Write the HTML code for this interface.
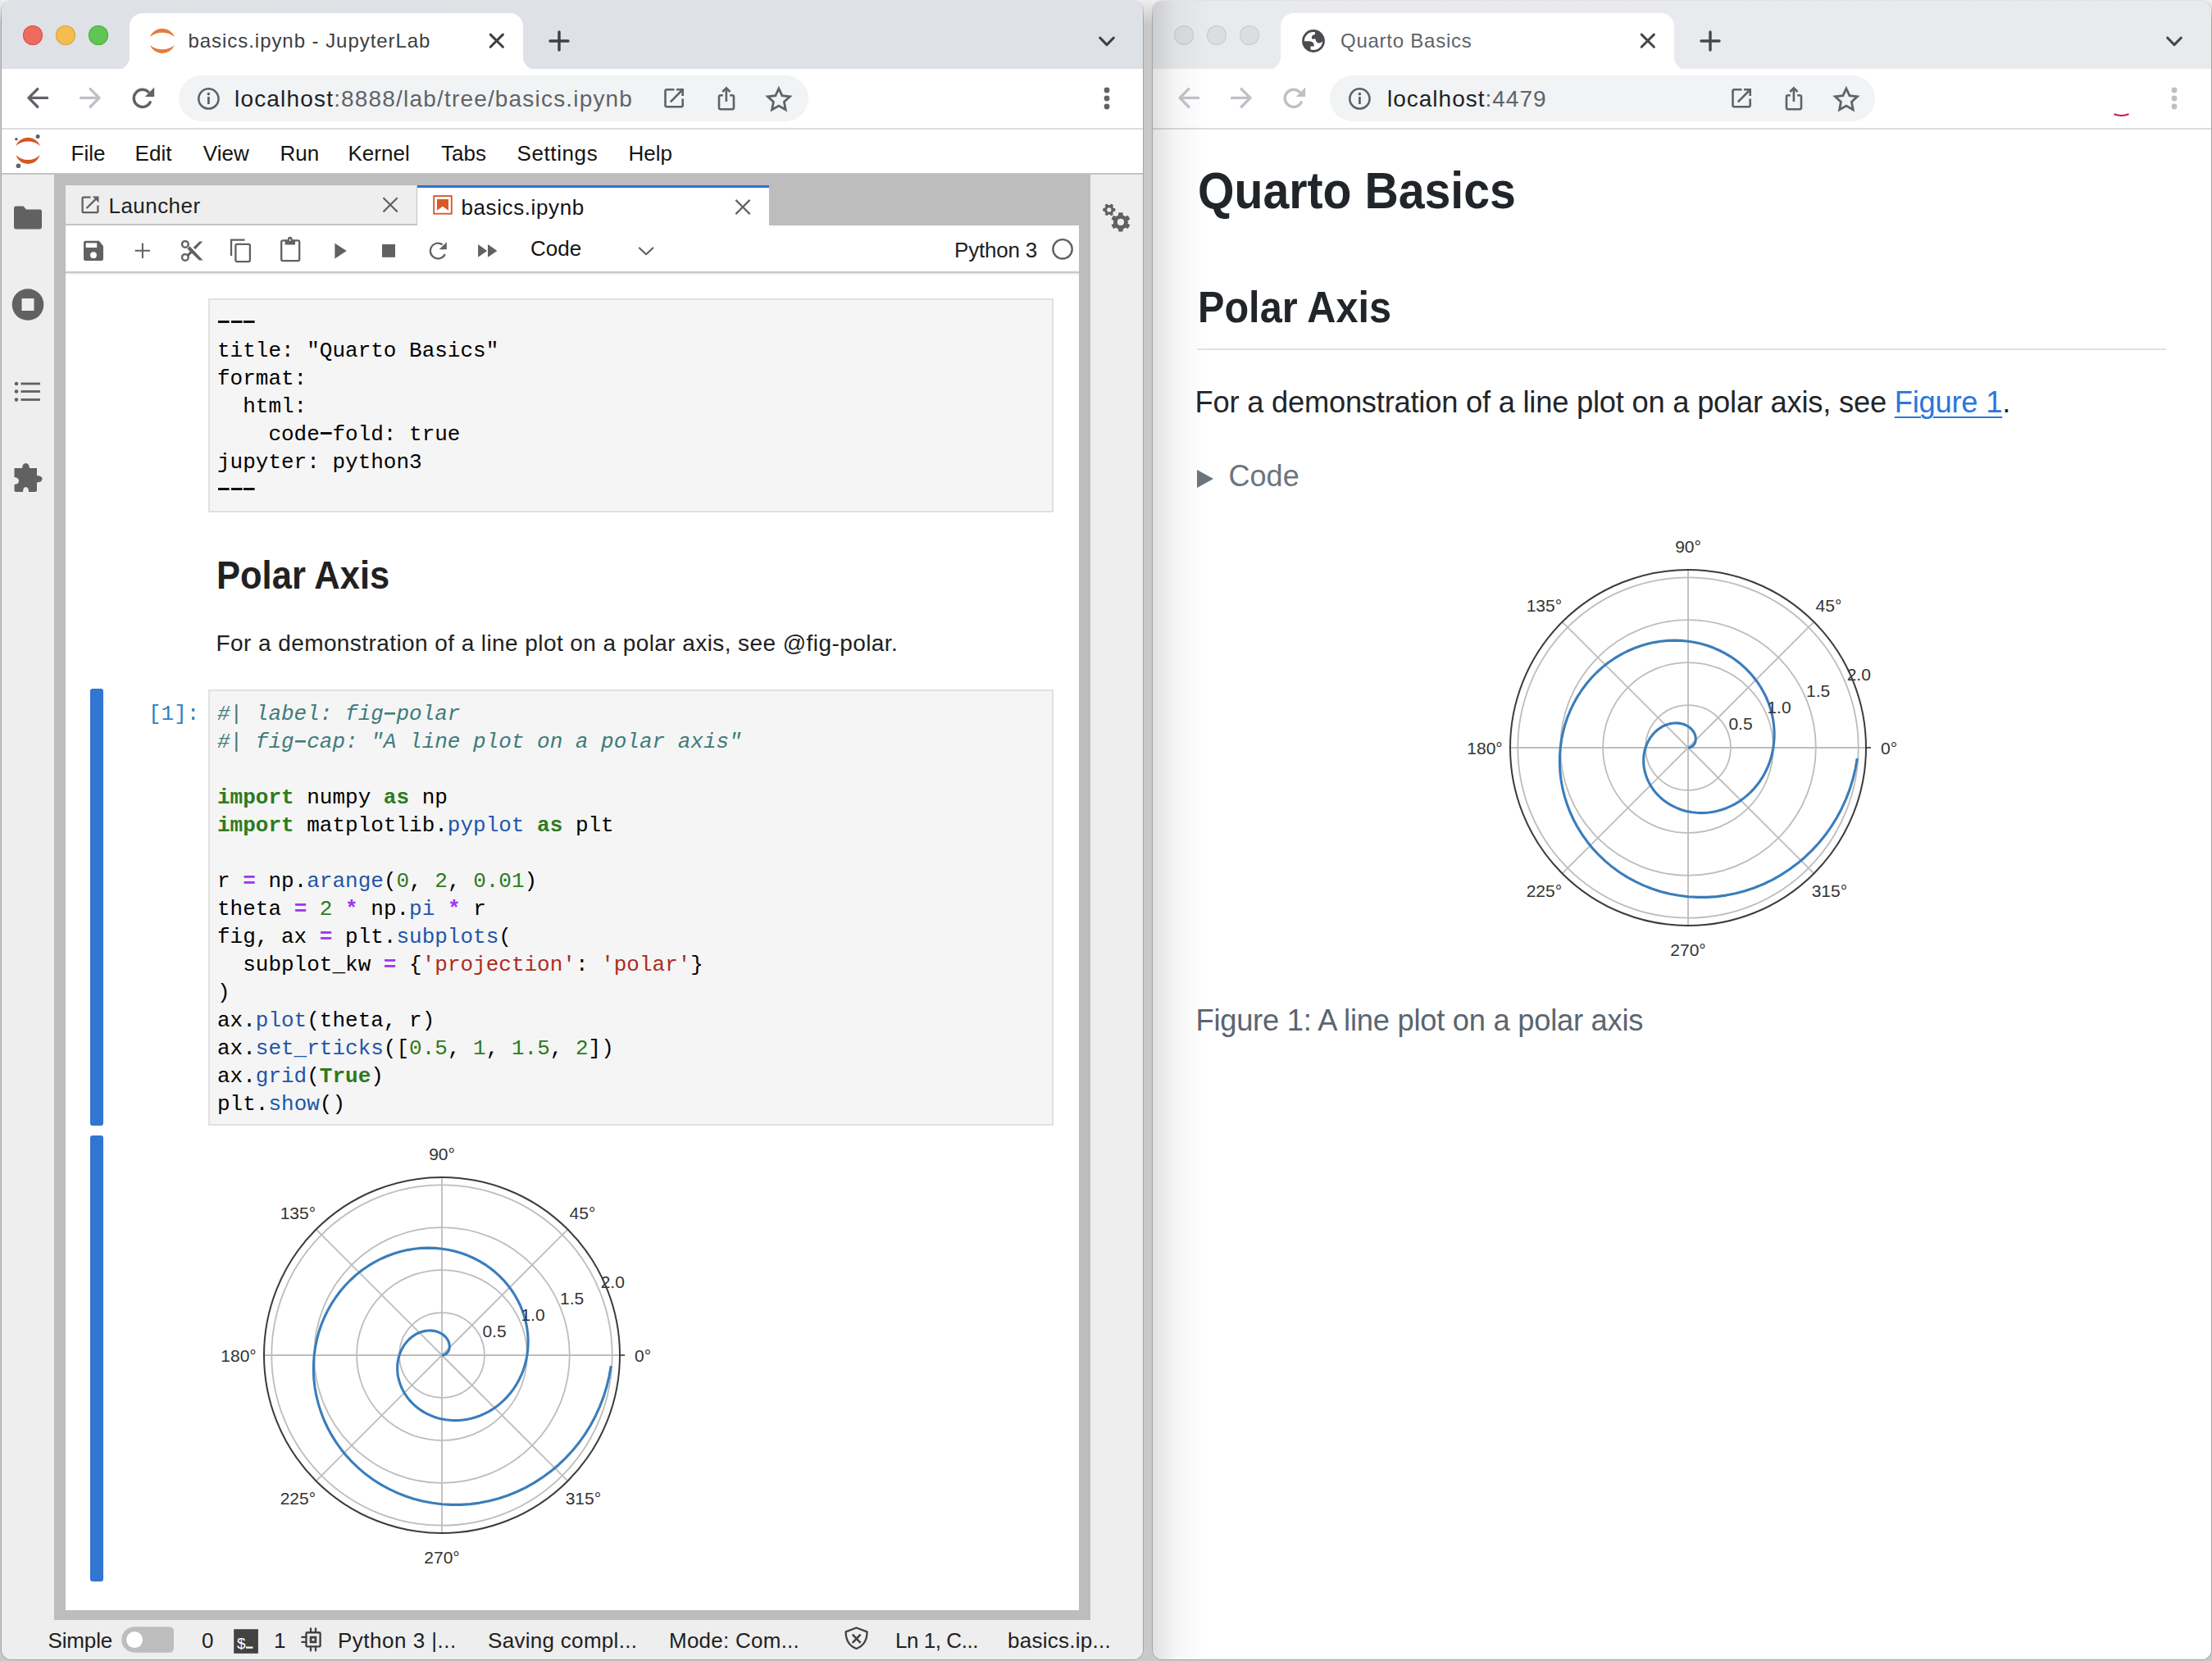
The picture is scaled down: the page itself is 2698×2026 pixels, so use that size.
<!DOCTYPE html>
<html><head><meta charset="utf-8"><style>
html,body{margin:0;padding:0;}
body{width:2698px;height:2026px;position:relative;overflow:hidden;background:linear-gradient(to bottom,#eeeeee 0,#c9c9c9 30px);font-family:"Liberation Sans", sans-serif;}
.r{position:absolute;display:block;}
.t{position:absolute;white-space:pre;line-height:1;}
.code{position:absolute;margin:0;font-family:"Liberation Mono", monospace;font-size:26px;line-height:34px;color:#000;}
.hy{display:inline-block;width:15.603px;height:34px;vertical-align:top;background:linear-gradient(#111,#111) no-repeat 1px 14.4px/13.6px 3.1px;} .hyc{background:linear-gradient(#3f7b7b,#3f7b7b) no-repeat 1.5px 14.6px/13px 2.6px;}
.cm{color:#3f7b7b;font-style:italic} .kw{color:#2d7b1e;font-weight:bold} .pr{color:#1f56a8} .op{color:#9e36f4;font-weight:bold} .nu{color:#2d7b1e} .st{color:#ae2a22}
svg text{font-family:"Liberation Sans", sans-serif;font-size:21px;fill:#333333;}
.foot{position:absolute;width:16px;height:16px;background:radial-gradient(circle at 0 0, #dee1e6 16px, #fff 16.5px);}
.foot.r2{background:radial-gradient(circle at 100% 0, #dee1e6 16px, #fff 16.5px);}
.foot.f2{background:radial-gradient(circle at 0 0, #e8eaed 16px, #fff 16.5px);}
.foot.f2.r2{background:radial-gradient(circle at 100% 0, #e8eaed 16px, #fff 16.5px);}
</style></head><body>
<div class="r" style="left:1px;top:0px;width:1394px;height:2025px;background:linear-gradient(to bottom,#e4e4e4 0,#a4a4a4 24px);border-radius:13px;"></div>
<div class="r" style="left:2px;top:1px;width:1392px;height:2023px;background:#dee1e6;border-radius:12px;"></div>
<div class="r" style="left:158px;top:16px;width:480px;height:69px;background:#ffffff;border-radius:16px 16px 0 0;"></div>
<div class="foot" style="left:142px;top:69px;"></div>
<div class="foot r2" style="left:638px;top:69px;"></div>
<div class="r" style="left:28px;top:31px;width:24px;height:24px;background:#ee6a5f;border-radius:50%;box-shadow:inset 0 0 0 1px #d6534a;"></div>
<div class="r" style="left:68px;top:31px;width:24px;height:24px;background:#f5bd4f;border-radius:50%;box-shadow:inset 0 0 0 1px #d9a13b;"></div>
<div class="r" style="left:108px;top:31px;width:24px;height:24px;background:#61c555;border-radius:50%;box-shadow:inset 0 0 0 1px #4da942;"></div>
<div class="r" style="left:2px;top:84px;width:1392px;height:73px;background:#ffffff;"></div>
<div class="r" style="left:2px;top:156px;width:1392px;height:2px;background:#dadce0;"></div>
<div class="r" style="left:218px;top:92px;width:768px;height:56px;background:#f1f3f4;border-radius:28px;"></div>
<div class="r" style="left:2px;top:158px;width:1392px;height:54px;background:#ffffff;"></div>
<div class="r" style="left:2px;top:211px;width:1392px;height:2px;background:#c4c4c4;"></div>
<div class="r" style="left:2px;top:213px;width:64px;height:1763px;background:#eeeeee;"></div>
<div class="r" style="left:1330px;top:213px;width:64px;height:1763px;background:#eeeeee;"></div>
<div class="r" style="left:66px;top:212px;width:1264px;height:1764px;background:#bdbdbd;"></div>
<div class="r" style="left:80px;top:226px;width:429px;height:49px;background:#eeeeee;"></div>
<div class="r" style="left:80px;top:273px;width:429px;height:2px;background:#c4c4c4;"></div>
<div class="r" style="left:508px;top:226px;width:1px;height:49px;background:#c4c4c4;"></div>
<div class="r" style="left:509px;top:226px;width:429px;height:49px;background:#ffffff;"></div>
<div class="r" style="left:509px;top:226px;width:429px;height:3px;background:#2f72d0;"></div>
<div class="r" style="left:80px;top:275px;width:1236px;height:1689px;background:#ffffff;"></div>
<div class="r" style="left:80px;top:331px;width:1236px;height:2px;background:#c8c8c8;box-shadow:0 1px 2px rgba(0,0,0,0.15);"></div>
<div class="r" style="left:2px;top:1976px;width:1392px;height:48px;background:#eeeeee;border-radius:0 0 12px 12px;"></div>
<div class="r" style="left:1405px;top:0px;width:1293px;height:2025px;background:linear-gradient(to bottom,#e4e4e4 0,#a4a4a4 24px);border-radius:13px;"></div>
<div class="r" style="left:1406px;top:1px;width:1291px;height:2023px;background:#e8eaed;border-radius:12px;"></div>
<div class="r" style="left:1562px;top:16px;width:480px;height:69px;background:#ffffff;border-radius:16px 16px 0 0;"></div>
<div class="foot f2" style="left:1546px;top:69px;"></div>
<div class="foot f2 r2" style="left:2042px;top:69px;"></div>
<div class="r" style="left:1432px;top:31px;width:24px;height:24px;background:#dcdddf;border-radius:50%;box-shadow:inset 0 0 0 1px #c8c9cb;"></div>
<div class="r" style="left:1472px;top:31px;width:24px;height:24px;background:#dcdddf;border-radius:50%;box-shadow:inset 0 0 0 1px #c8c9cb;"></div>
<div class="r" style="left:1512px;top:31px;width:24px;height:24px;background:#dcdddf;border-radius:50%;box-shadow:inset 0 0 0 1px #c8c9cb;"></div>
<div class="r" style="left:1406px;top:84px;width:1291px;height:73px;background:#ffffff;"></div>
<div class="r" style="left:1406px;top:156px;width:1291px;height:2px;background:#dadce0;"></div>
<div class="r" style="left:1622px;top:92px;width:665px;height:56px;background:#f1f3f4;border-radius:28px;"></div>
<div class="r" style="left:1406px;top:158px;width:1291px;height:1866px;background:#ffffff;border-radius:0 0 12px 12px;"></div>
<div class="r" style="left:1406px;top:1px;width:70px;height:2023px;background:linear-gradient(to right, rgba(0,0,0,0.12), rgba(0,0,0,0.035) 40%, rgba(0,0,0,0));border-radius:12px 0 0 12px;"></div>
<div class="t" style="left:229.5px;top:38.1px;font-size:24px;color:#3c4043;letter-spacing:0.95px;">basics.ipynb - JupyterLab</div>
<div class="t" style="left:286px;top:106.6px;font-size:28px;color:#202124;letter-spacing:1.18px;">localhost<span style="color:#5f6368">:8888/lab/tree/basics.ipynb</span></div>
<div class="t" style="left:86.5px;top:174.2px;font-size:26px;color:#141414;">File</div>
<div class="t" style="left:164.6px;top:174.2px;font-size:26px;color:#141414;">Edit</div>
<div class="t" style="left:247.8px;top:174.2px;font-size:26px;color:#141414;">View</div>
<div class="t" style="left:341.5px;top:174.2px;font-size:26px;color:#141414;">Run</div>
<div class="t" style="left:424.5px;top:174.2px;font-size:26px;color:#141414;">Kernel</div>
<div class="t" style="left:538px;top:174.2px;font-size:26px;color:#141414;">Tabs</div>
<div class="t" style="left:630.5px;top:174.2px;font-size:26px;color:#141414;letter-spacing:0.6px;">Settings</div>
<div class="t" style="left:766.5px;top:174.2px;font-size:26px;color:#141414;">Help</div>
<div class="t" style="left:132.5px;top:238.2px;font-size:26px;color:#212121;letter-spacing:0.45px;">Launcher</div>
<div class="t" style="left:562.5px;top:239.6px;font-size:26px;color:#141414;letter-spacing:0.6px;">basics.ipynb</div>
<div class="t" style="left:647px;top:290.4px;font-size:26px;color:#141414;">Code</div>
<div class="t" style="left:1164px;top:292.0px;font-size:26px;color:#212121;letter-spacing:-0.2px;">Python 3</div>
<div class="t" style="left:58.5px;top:1987.6px;font-size:26px;color:#212121;letter-spacing:-0.15px;">Simple</div>
<div class="t" style="left:246px;top:1987.6px;font-size:26px;color:#212121;">0</div>
<div class="t" style="left:334px;top:1987.6px;font-size:26px;color:#212121;">1</div>
<div class="t" style="left:412px;top:1987.6px;font-size:26px;color:#212121;letter-spacing:0.5px;">Python 3 |...</div>
<div class="t" style="left:595px;top:1987.6px;font-size:26px;color:#212121;letter-spacing:0.3px;">Saving compl...</div>
<div class="t" style="left:816px;top:1987.6px;font-size:26px;color:#212121;letter-spacing:0.25px;">Mode: Com...</div>
<div class="t" style="left:1092px;top:1987.6px;font-size:26px;color:#212121;letter-spacing:-0.45px;">Ln 1, C...</div>
<div class="t" style="left:1229px;top:1987.6px;font-size:26px;color:#212121;letter-spacing:0.26px;">basics.ip...</div>
<div class="r" style="left:254px;top:364px;width:1031px;height:261px;background:#f5f5f5;box-shadow:inset 0 0 0 2px #e0e0e0;"></div>
<pre class="code" style="left:265px;top:377.1px;"><span class="hy"></span><span class="hy"></span><span class="hy"></span>
title: "Quarto Basics"
format:
  html:
    code<span class="hy"></span>fold: true
jupyter: python3
<span class="hy"></span><span class="hy"></span><span class="hy"></span></pre>
<div class="t" style="left:263.5px;top:676.8px;font-size:49px;color:#212121;font-weight:bold;transform:scaleX(0.888);transform-origin:0 0;">Polar Axis</div>
<div class="t" style="left:263.5px;top:770.6px;font-size:28px;color:#212121;letter-spacing:0.42px;">For a demonstration of a line plot on a polar axis, see @fig-polar.</div>
<div class="r" style="left:110px;top:840px;width:16px;height:533px;background:#3176d0;border-radius:3px;"></div>
<div class="r" style="left:254px;top:841px;width:1031px;height:532px;background:#f5f5f5;box-shadow:inset 0 0 0 2px #e0e0e0;"></div>
<pre class="code" style="left:181px;top:854.1px;color:#307fc1">[1]:</pre>
<pre class="code" style="left:265px;top:854.1px;"><span class="cm">#| label: fig<span class="hy hyc"></span>polar</span>
<span class="cm">#| fig<span class="hy hyc"></span>cap: "A line plot on a polar axis"</span>

<span class="kw">import</span> numpy <span class="kw">as</span> np
<span class="kw">import</span> matplotlib.<span class="pr">pyplot</span> <span class="kw">as</span> plt

r <span class="op">=</span> np.<span class="pr">arange</span>(<span class="nu">0</span>, <span class="nu">2</span>, <span class="nu">0.01</span>)
theta <span class="op">=</span> <span class="nu">2</span> <span class="op">*</span> np.<span class="pr">pi</span> <span class="op">*</span> r
fig, ax <span class="op">=</span> plt.<span class="pr">subplots</span>(
  subplot_kw <span class="op">=</span> {<span class="st">'projection'</span>: <span class="st">'polar'</span>}
)
ax.<span class="pr">plot</span>(theta, r)
ax.<span class="pr">set_rticks</span>([<span class="nu">0.5</span>, <span class="nu">1</span>, <span class="nu">1.5</span>, <span class="nu">2</span>])
ax.<span class="pr">grid</span>(<span class="kw">True</span>)
plt.<span class="pr">show</span>()</pre>
<div class="r" style="left:110px;top:1385px;width:16px;height:544px;background:#3176d0;border-radius:3px;"></div>
<svg class="r" style="left:258.6px;top:1372.8px;overflow:visible;" width="560" height="560" viewBox="-280 -280 560 560"><circle r="51.9" fill="none" stroke="#bdbdbd" stroke-width="1.8"/>
<circle r="103.9" fill="none" stroke="#bdbdbd" stroke-width="1.8"/>
<circle r="155.8" fill="none" stroke="#bdbdbd" stroke-width="1.8"/>
<circle r="207.7" fill="none" stroke="#bdbdbd" stroke-width="1.8"/>
<line x1="0" y1="0" x2="217.0" y2="-0.0" stroke="#bdbdbd" stroke-width="1.8"/>
<line x1="0" y1="0" x2="153.4" y2="-153.4" stroke="#bdbdbd" stroke-width="1.8"/>
<line x1="0" y1="0" x2="0.0" y2="-217.0" stroke="#bdbdbd" stroke-width="1.8"/>
<line x1="0" y1="0" x2="-153.4" y2="-153.4" stroke="#bdbdbd" stroke-width="1.8"/>
<line x1="0" y1="0" x2="-217.0" y2="-0.0" stroke="#bdbdbd" stroke-width="1.8"/>
<line x1="0" y1="0" x2="-153.4" y2="153.4" stroke="#bdbdbd" stroke-width="1.8"/>
<line x1="0" y1="0" x2="-0.0" y2="217.0" stroke="#bdbdbd" stroke-width="1.8"/>
<line x1="0" y1="0" x2="153.4" y2="153.4" stroke="#bdbdbd" stroke-width="1.8"/>
<path d="M0.0,-0.0 L1.0,-0.1 L2.1,-0.3 L3.1,-0.6 L4.0,-1.0 L4.9,-1.6 L5.8,-2.3 L6.6,-3.1 L7.3,-4.0 L7.9,-5.0 L8.4,-6.1 L8.8,-7.3 L9.1,-8.5 L9.2,-9.8 L9.3,-11.2 L9.2,-12.6 L8.9,-14.0 L8.5,-15.5 L8.0,-16.9 L7.3,-18.3 L6.4,-19.8 L5.4,-21.1 L4.3,-22.4 L3.0,-23.7 L1.6,-24.9 L0.0,-26.0 L-1.7,-26.9 L-3.5,-27.8 L-5.4,-28.6 L-7.5,-29.2 L-9.6,-29.6 L-11.9,-29.9 L-14.1,-30.1 L-16.5,-30.0 L-18.9,-29.8 L-21.4,-29.4 L-23.8,-28.8 L-26.3,-28.0 L-28.8,-27.0 L-31.2,-25.8 L-33.6,-24.4 L-36.0,-22.8 L-38.2,-21.0 L-40.4,-19.0 L-42.5,-16.8 L-44.4,-14.4 L-46.3,-11.9 L-47.9,-9.1 L-49.5,-6.2 L-50.8,-3.2 L-51.9,-0.0 L-52.9,3.3 L-53.6,6.8 L-54.1,10.3 L-54.3,13.9 L-54.3,17.7 L-54.1,21.4 L-53.6,25.2 L-52.8,29.0 L-51.7,32.8 L-50.4,36.6 L-48.8,40.4 L-46.9,44.1 L-44.8,47.7 L-42.4,51.2 L-39.7,54.6 L-36.7,57.9 L-33.5,61.0 L-30.1,63.9 L-26.4,66.6 L-22.5,69.1 L-18.3,71.4 L-14.0,73.4 L-9.5,75.2 L-4.8,76.7 L-0.0,77.9 L5.0,78.8 L10.0,79.3 L15.2,79.6 L20.4,79.5 L25.7,79.0 L31.0,78.2 L36.3,77.1 L41.5,75.5 L46.7,73.7 L51.9,71.4 L56.9,68.8 L61.9,65.9 L66.6,62.6 L71.2,58.9 L75.6,54.9 L79.8,50.6 L83.7,46.0 L87.4,41.1 L90.8,35.9 L93.8,30.5 L96.6,24.8 L99.0,18.9 L101.0,12.8 L102.6,6.5 L103.9,0.0 L104.7,-6.6 L105.1,-13.3 L105.1,-20.0 L104.6,-26.9 L103.7,-33.7 L102.4,-40.5 L100.5,-47.3 L98.3,-54.0 L95.6,-60.7 L92.4,-67.1 L88.8,-73.5 L84.8,-79.6 L80.3,-85.5 L75.5,-91.2 L70.2,-96.6 L64.6,-101.7 L58.5,-106.5 L52.2,-110.9 L45.5,-114.9 L38.5,-118.5 L31.3,-121.7 L23.7,-124.5 L16.0,-126.7 L8.1,-128.5 L0.0,-129.8 L-8.2,-130.6 L-16.5,-130.9 L-24.9,-130.6 L-33.3,-129.8 L-41.7,-128.4 L-50.1,-126.5 L-58.4,-124.0 L-66.5,-121.0 L-74.6,-117.5 L-82.4,-113.4 L-90.0,-108.8 L-97.4,-103.7 L-104.5,-98.1 L-111.2,-92.0 L-117.6,-85.5 L-123.6,-78.5 L-129.2,-71.0 L-134.4,-63.2 L-139.0,-55.1 L-143.2,-46.5 L-146.9,-37.7 L-150.0,-28.6 L-152.5,-19.3 L-154.4,-9.7 L-155.8,-0.0 L-156.5,9.8 L-156.6,19.8 L-156.1,29.8 L-154.9,39.8 L-153.1,49.7 L-150.6,59.6 L-147.5,69.4 L-143.8,79.0 L-139.4,88.5 L-134.4,97.7 L-128.8,106.6 L-122.6,115.2 L-115.9,123.4 L-108.6,131.2 L-100.7,138.6 L-92.4,145.6 L-83.6,152.0 L-74.3,157.9 L-64.6,163.2 L-54.6,167.9 L-44.2,172.0 L-33.5,175.5 L-22.5,178.2 L-11.3,180.3 L-0.0,181.7 L11.5,182.4 L23.0,182.4 L34.6,181.6 L46.2,180.1 L57.8,177.8 L69.2,174.8 L80.5,171.0 L91.6,166.5 L102.4,161.3 L112.9,155.4 L123.1,148.8 L132.9,141.6 L142.3,133.7 L151.2,125.1 L159.6,116.0 L167.5,106.3 L174.7,96.1 L181.4,85.3 L187.3,74.2 L192.6,62.6 L197.2,50.6 L201.0,38.3 L204.0,25.8 L206.3,13.0" fill="none" stroke="#3a7dba" stroke-width="3.1" stroke-linejoin="round"/>
<circle r="217" fill="none" stroke="#3c3c3c" stroke-width="2"/>
<line x1="217" y1="0" x2="223" y2="0" stroke="#333" stroke-width="1.6"/>
<text x="0" y="-238.5" text-anchor="middle">90°</text>
<text x="171.5" y="-166.5" text-anchor="middle">45°</text>
<text x="-175.6" y="-166.5" text-anchor="middle">135°</text>
<text x="-248" y="7.5" text-anchor="middle">180°</text>
<text x="245" y="7.5" text-anchor="middle">0°</text>
<text x="-175.6" y="181.5" text-anchor="middle">225°</text>
<text x="172.4" y="181.5" text-anchor="middle">315°</text>
<text x="0" y="253.5" text-anchor="middle">270°</text>
<text x="64" y="-21.9" text-anchor="middle">0.5</text>
<text x="111" y="-42.3" text-anchor="middle">1.0</text>
<text x="158.7" y="-62.3" text-anchor="middle">1.5</text>
<text x="208.3" y="-82.5" text-anchor="middle">2.0</text></svg>
<div class="t" style="left:1635px;top:38.1px;font-size:24px;color:#5f6368;letter-spacing:0.75px;">Quarto Basics</div>
<div class="t" style="left:1692px;top:106.6px;font-size:28px;color:#202124;letter-spacing:1.0px;">localhost<span style="color:#5f6368">:4479</span></div>
<div class="t" style="left:1460.5px;top:200.9px;font-size:63px;color:#212529;font-weight:bold;transform:scaleX(0.908);transform-origin:0 0;">Quarto Basics</div>
<div class="t" style="left:1460.5px;top:348.0px;font-size:54.5px;color:#212529;font-weight:bold;transform:scaleX(0.892);transform-origin:0 0;">Polar Axis</div>
<div class="r" style="left:1460px;top:425px;width:1182px;height:2px;background:#dee2e6;"></div>
<div class="t" style="left:1457.5px;top:473.3px;font-size:36.3px;color:#212529;letter-spacing:-0.22px;">For a demonstration of a line plot on a polar axis, see <span style="color:#2a76dd;text-decoration:underline;text-decoration-thickness:2px;text-underline-offset:5px">Figure 1</span>.</div>
<svg class="r" style="left:1460px;top:573px;" width="20" height="22" viewBox="0 0 20 22"><path d="M0 0 L20 11 L0 22 Z" fill="#6c757d"/></svg>
<div class="t" style="left:1498.6px;top:562.9px;font-size:36px;color:#6c757d;">Code</div>
<svg class="r" style="left:1779.4px;top:631.8px;overflow:visible;" width="560" height="560" viewBox="-280 -280 560 560"><circle r="51.9" fill="none" stroke="#bdbdbd" stroke-width="1.8"/>
<circle r="103.9" fill="none" stroke="#bdbdbd" stroke-width="1.8"/>
<circle r="155.8" fill="none" stroke="#bdbdbd" stroke-width="1.8"/>
<circle r="207.7" fill="none" stroke="#bdbdbd" stroke-width="1.8"/>
<line x1="0" y1="0" x2="217.0" y2="-0.0" stroke="#bdbdbd" stroke-width="1.8"/>
<line x1="0" y1="0" x2="153.4" y2="-153.4" stroke="#bdbdbd" stroke-width="1.8"/>
<line x1="0" y1="0" x2="0.0" y2="-217.0" stroke="#bdbdbd" stroke-width="1.8"/>
<line x1="0" y1="0" x2="-153.4" y2="-153.4" stroke="#bdbdbd" stroke-width="1.8"/>
<line x1="0" y1="0" x2="-217.0" y2="-0.0" stroke="#bdbdbd" stroke-width="1.8"/>
<line x1="0" y1="0" x2="-153.4" y2="153.4" stroke="#bdbdbd" stroke-width="1.8"/>
<line x1="0" y1="0" x2="-0.0" y2="217.0" stroke="#bdbdbd" stroke-width="1.8"/>
<line x1="0" y1="0" x2="153.4" y2="153.4" stroke="#bdbdbd" stroke-width="1.8"/>
<path d="M0.0,-0.0 L1.0,-0.1 L2.1,-0.3 L3.1,-0.6 L4.0,-1.0 L4.9,-1.6 L5.8,-2.3 L6.6,-3.1 L7.3,-4.0 L7.9,-5.0 L8.4,-6.1 L8.8,-7.3 L9.1,-8.5 L9.2,-9.8 L9.3,-11.2 L9.2,-12.6 L8.9,-14.0 L8.5,-15.5 L8.0,-16.9 L7.3,-18.3 L6.4,-19.8 L5.4,-21.1 L4.3,-22.4 L3.0,-23.7 L1.6,-24.9 L0.0,-26.0 L-1.7,-26.9 L-3.5,-27.8 L-5.4,-28.6 L-7.5,-29.2 L-9.6,-29.6 L-11.9,-29.9 L-14.1,-30.1 L-16.5,-30.0 L-18.9,-29.8 L-21.4,-29.4 L-23.8,-28.8 L-26.3,-28.0 L-28.8,-27.0 L-31.2,-25.8 L-33.6,-24.4 L-36.0,-22.8 L-38.2,-21.0 L-40.4,-19.0 L-42.5,-16.8 L-44.4,-14.4 L-46.3,-11.9 L-47.9,-9.1 L-49.5,-6.2 L-50.8,-3.2 L-51.9,-0.0 L-52.9,3.3 L-53.6,6.8 L-54.1,10.3 L-54.3,13.9 L-54.3,17.7 L-54.1,21.4 L-53.6,25.2 L-52.8,29.0 L-51.7,32.8 L-50.4,36.6 L-48.8,40.4 L-46.9,44.1 L-44.8,47.7 L-42.4,51.2 L-39.7,54.6 L-36.7,57.9 L-33.5,61.0 L-30.1,63.9 L-26.4,66.6 L-22.5,69.1 L-18.3,71.4 L-14.0,73.4 L-9.5,75.2 L-4.8,76.7 L-0.0,77.9 L5.0,78.8 L10.0,79.3 L15.2,79.6 L20.4,79.5 L25.7,79.0 L31.0,78.2 L36.3,77.1 L41.5,75.5 L46.7,73.7 L51.9,71.4 L56.9,68.8 L61.9,65.9 L66.6,62.6 L71.2,58.9 L75.6,54.9 L79.8,50.6 L83.7,46.0 L87.4,41.1 L90.8,35.9 L93.8,30.5 L96.6,24.8 L99.0,18.9 L101.0,12.8 L102.6,6.5 L103.9,0.0 L104.7,-6.6 L105.1,-13.3 L105.1,-20.0 L104.6,-26.9 L103.7,-33.7 L102.4,-40.5 L100.5,-47.3 L98.3,-54.0 L95.6,-60.7 L92.4,-67.1 L88.8,-73.5 L84.8,-79.6 L80.3,-85.5 L75.5,-91.2 L70.2,-96.6 L64.6,-101.7 L58.5,-106.5 L52.2,-110.9 L45.5,-114.9 L38.5,-118.5 L31.3,-121.7 L23.7,-124.5 L16.0,-126.7 L8.1,-128.5 L0.0,-129.8 L-8.2,-130.6 L-16.5,-130.9 L-24.9,-130.6 L-33.3,-129.8 L-41.7,-128.4 L-50.1,-126.5 L-58.4,-124.0 L-66.5,-121.0 L-74.6,-117.5 L-82.4,-113.4 L-90.0,-108.8 L-97.4,-103.7 L-104.5,-98.1 L-111.2,-92.0 L-117.6,-85.5 L-123.6,-78.5 L-129.2,-71.0 L-134.4,-63.2 L-139.0,-55.1 L-143.2,-46.5 L-146.9,-37.7 L-150.0,-28.6 L-152.5,-19.3 L-154.4,-9.7 L-155.8,-0.0 L-156.5,9.8 L-156.6,19.8 L-156.1,29.8 L-154.9,39.8 L-153.1,49.7 L-150.6,59.6 L-147.5,69.4 L-143.8,79.0 L-139.4,88.5 L-134.4,97.7 L-128.8,106.6 L-122.6,115.2 L-115.9,123.4 L-108.6,131.2 L-100.7,138.6 L-92.4,145.6 L-83.6,152.0 L-74.3,157.9 L-64.6,163.2 L-54.6,167.9 L-44.2,172.0 L-33.5,175.5 L-22.5,178.2 L-11.3,180.3 L-0.0,181.7 L11.5,182.4 L23.0,182.4 L34.6,181.6 L46.2,180.1 L57.8,177.8 L69.2,174.8 L80.5,171.0 L91.6,166.5 L102.4,161.3 L112.9,155.4 L123.1,148.8 L132.9,141.6 L142.3,133.7 L151.2,125.1 L159.6,116.0 L167.5,106.3 L174.7,96.1 L181.4,85.3 L187.3,74.2 L192.6,62.6 L197.2,50.6 L201.0,38.3 L204.0,25.8 L206.3,13.0" fill="none" stroke="#3a7dba" stroke-width="3.1" stroke-linejoin="round"/>
<circle r="217" fill="none" stroke="#3c3c3c" stroke-width="2"/>
<line x1="217" y1="0" x2="223" y2="0" stroke="#333" stroke-width="1.6"/>
<text x="0" y="-238.5" text-anchor="middle">90°</text>
<text x="171.5" y="-166.5" text-anchor="middle">45°</text>
<text x="-175.6" y="-166.5" text-anchor="middle">135°</text>
<text x="-248" y="7.5" text-anchor="middle">180°</text>
<text x="245" y="7.5" text-anchor="middle">0°</text>
<text x="-175.6" y="181.5" text-anchor="middle">225°</text>
<text x="172.4" y="181.5" text-anchor="middle">315°</text>
<text x="0" y="253.5" text-anchor="middle">270°</text>
<text x="64" y="-21.9" text-anchor="middle">0.5</text>
<text x="111" y="-42.3" text-anchor="middle">1.0</text>
<text x="158.7" y="-62.3" text-anchor="middle">1.5</text>
<text x="208.3" y="-82.5" text-anchor="middle">2.0</text></svg>
<div class="t" style="left:1458.5px;top:1226.9px;font-size:36.3px;color:#5a6570;letter-spacing:-0.25px;">Figure 1: A line plot on a polar axis</div>
<svg class="r" style="left:0;top:0" width="2698" height="2026" viewBox="0 0 2698 2026"><path d="M182.9,44.9 A16.19,16.19 0 0 1 212.9,44.9 A24.23,24.23 0 0 0 182.9,44.9 Z" fill="#e67a3a"/><path d="M182.9,55.2 A16.38,16.38 0 0 0 212.9,55.2 A24.61,24.61 0 0 1 182.9,55.2 Z" fill="#e67a3a"/><path d="M598.1999999999999,42.1 L613.4,57.3 M613.4,42.1 L598.1999999999999,57.3" stroke="#3c4043" stroke-width="3" stroke-linecap="round"/><path d="M671,50 H693 M682,39 V61" stroke="#3c4043" stroke-width="3.4" stroke-linecap="round"/><path d="M1341.7,46.166666666666664 L1350,54.6 L1358.3,46.166666666666664" fill="none" stroke="#3c4043" stroke-width="3" stroke-linecap="round" stroke-linejoin="round"/><g fill="none" stroke-linecap="round" stroke-linejoin="round" stroke-width="3.4"><path d="M57.6,119.4 H35 M45.8,108.6 L35,119.4 L45.8,130.2" stroke="#5f6368"/><path d="M98.5,119.4 H121 M110.2,108.6 L121,119.4 L110.2,130.2" stroke="#bdc1c6"/></g><path d="M183.2,124.8 A10.6,10.6 0 1 1 180.9,111.9" fill="none" stroke="#5f6368" stroke-width="3.4" stroke-linecap="round"/><path d="M188.2,106.6 V118 H176.8 Z" fill="#5f6368"/><circle cx="254.4" cy="120.4" r="12.1" fill="none" stroke="#5f6368" stroke-width="2.6"/><circle cx="254.4" cy="114.6" r="1.8" fill="#5f6368"/><rect x="253.0" y="118" width="2.8" height="9" fill="#5f6368"/><g fill="none" stroke="#5f6368" stroke-width="2.6"><path d="M822.5,109.3 H813.5 Q811.5,109.3 811.5,111.3 V128.3 Q811.5,130.3 813.5,130.3 H830.7 Q832.7,130.3 832.7,128.3 V120.5"/><path d="M817.8,124.4 L831.5,110.5"/><path d="M825,109.3 H832.7 V117"/></g><g fill="none" stroke="#5f6368" stroke-width="2.6"><path d="M881.8,116.3 H879 Q877,116.3 877,118.3 V131.2 Q877,133.2 879,133.2 H893 Q895,133.2 895,131.2 V118.3 Q895,116.3 893,116.3 H890.2"/><path d="M885.9,124 V108"/><path d="M881.3,112 L885.9,107.4 L890.5,112"/></g><polygon points="949.9,108.0 953.9,116.7 963.4,117.8 956.4,124.3 958.2,133.7 949.9,129.0 941.6,133.7 943.4,124.3 936.4,117.8 945.9,116.7" fill="none" stroke="#5f6368" stroke-width="2.8" stroke-linejoin="miter"/><circle cx="1350" cy="110" r="3.4" fill="#5f6368"/><circle cx="1350" cy="120" r="3.4" fill="#5f6368"/><circle cx="1350" cy="130" r="3.4" fill="#5f6368"/><path d="M19.3,177.9 A15.89,15.89 0 0 1 48.9,177.9 A23.31,23.31 0 0 0 19.3,177.9 Z" fill="#d6561f"/><path d="M19.3,189.1 A15.50,15.50 0 0 0 48.9,189.1 A21.25,21.25 0 0 1 19.3,189.1 Z" fill="#d6561f"/><circle cx="46.1" cy="166.6" r="2.5" fill="#616161"/><circle cx="19.9" cy="169.8" r="1.8" fill="#616161"/><circle cx="22.4" cy="202.2" r="2.8" fill="#616161"/><path d="M17,254 Q17,251.6 19.4,251.6 H28.5 L32,255.4 H48.6 Q51,255.4 51,257.8 V277 Q51,279.4 48.6,279.4 H19.4 Q17,279.4 17,277 Z" fill="#616161"/><circle cx="34" cy="371.5" r="19.3" fill="#616161"/><rect x="26.5" y="364" width="15" height="15" fill="#eeeeee"/><circle cx="20" cy="468.0" r="2.3" fill="#616161"/><rect x="25.5" y="466.6" width="23.5" height="2.8" fill="#616161"/><circle cx="20" cy="477.5" r="2.3" fill="#616161"/><rect x="25.5" y="476.1" width="23.5" height="2.8" fill="#616161"/><circle cx="20" cy="487.5" r="2.3" fill="#616161"/><rect x="25.5" y="486.1" width="23.5" height="2.8" fill="#616161"/><path d="M17.5,571 H27 Q27.5,565 31.5,565 Q35.5,565 36,571 H45 V580 Q51.5,580.5 51.5,584 Q51.5,588 45,588.5 V598 Q45,600 43,600 H35 Q35,594 31.5,594 Q28,594 28,600 H19.5 Q17.5,600 17.5,598 V591 Q23,590.5 23,586.5 Q23,582.5 17.5,582 Z" fill="#616161"/><g fill="none" stroke="#616161" stroke-width="2.3"><path d="M110.5,240.6 H102 Q100.6,240.6 100.6,242 V257.8 Q100.6,259.2 102,259.2 H118 Q119.4,259.2 119.4,257.8 V250.5"/><path d="M105.6,254 L118,241.6"/></g><path d="M112.7,239.5 H120.5 V247.3 Z" fill="#616161"/><path d="M467.5,241.20000000000002 L484.70000000000005,258.40000000000003 M484.70000000000005,241.20000000000002 L467.5,258.40000000000003" stroke="#616161" stroke-width="2.2"/><path d="M897.4,243.9 L914.6,261.1 M914.6,243.9 L897.4,261.1" stroke="#616161" stroke-width="2.2"/><rect x="529.2" y="239.1" width="21.6" height="21.6" fill="none" stroke="#da5b27" stroke-width="1.9"/><path d="M533,242.9 H547 V256.8 L540,251.7 L533,256.8 Z" fill="#d95a24"/><path d="M102,296 Q102,293.8 104.2,293.8 H120.8 L126,300.3 V315.8 Q126,318 123.8,318 H104.2 Q102,318 102,315.8 Z" fill="#616161"/><rect x="104.7" y="296.4" width="13.5" height="5.6" fill="#fff"/><circle cx="114" cy="311.2" r="3.9" fill="#fff"/><path d="M164.7,305.8 H183.1 M173.9,296.6 V315" stroke="#616161" stroke-width="2"/><g fill="none" stroke="#616161" stroke-width="2.4"><circle cx="225.9" cy="297.9" r="3.8"/><circle cx="225.9" cy="313.9" r="3.8"/></g><path d="M228.4,303.4 L231.4,300.2 L247.6,317.4 H243 Z" fill="#616161"/><path d="M235.8,301.8 L243.4,294.5 H247.2 L238.2,304.2 Z" fill="#616161"/><path d="M229,311.6 L235,305.6" stroke="#616161" stroke-width="3"/><path d="M282,312 V292.7 H298.5" fill="none" stroke="#616161" stroke-width="2.3"/><rect x="287.4" y="297.8" width="17.5" height="21.3" rx="1.8" fill="none" stroke="#616161" stroke-width="2.3"/><rect x="343.2" y="293.3" width="22" height="24.8" rx="1.8" fill="none" stroke="#616161" stroke-width="2.3"/><rect x="347.6" y="292.5" width="12.4" height="6" fill="#616161"/><circle cx="353.8" cy="291.6" r="2.8" fill="#616161"/><circle cx="353.8" cy="292.8" r="1.1" fill="#fff"/><path d="M408.4,296.7 L422.8,306 L408.4,315.5 Z" fill="#616161"/><rect x="466" y="298" width="16" height="15.8" fill="#616161"/><path d="M542.8,310.0 A9.4,9.4 0 1 1 539.7,298.3" fill="none" stroke="#616161" stroke-width="2.2"/><path d="M544.8,295.2 V304.3 H535.7 Z" fill="#616161"/><path d="M583.1,298 L594.1,306 L583.1,313.8 Z M595,298 L606.4,306 L595,313.8 Z" fill="#616161"/><path d="M779.9,302.5 L788.1,310.2 L796.3000000000001,302.5" fill="none" stroke="#616161" stroke-width="2.2" stroke-linecap="round" stroke-linejoin="round"/><circle cx="1296" cy="303.8" r="11.7" fill="none" stroke="#616161" stroke-width="2.4"/><circle cx="1352.8" cy="255.9" r="5.9" fill="#616161"/><rect x="1351.00" y="248.30" width="3.60" height="7.60" rx="0.8" fill="#616161" transform="rotate(30.0 1352.8 255.9)"/><rect x="1351.00" y="248.30" width="3.60" height="7.60" rx="0.8" fill="#616161" transform="rotate(90.0 1352.8 255.9)"/><rect x="1351.00" y="248.30" width="3.60" height="7.60" rx="0.8" fill="#616161" transform="rotate(150.0 1352.8 255.9)"/><rect x="1351.00" y="248.30" width="3.60" height="7.60" rx="0.8" fill="#616161" transform="rotate(210.0 1352.8 255.9)"/><rect x="1351.00" y="248.30" width="3.60" height="7.60" rx="0.8" fill="#616161" transform="rotate(270.0 1352.8 255.9)"/><rect x="1351.00" y="248.30" width="3.60" height="7.60" rx="0.8" fill="#616161" transform="rotate(330.0 1352.8 255.9)"/><circle cx="1352.8" cy="255.9" r="2.6" fill="#eeeeee"/><circle cx="1366.9" cy="270.9" r="9.0" fill="#616161"/><rect x="1364.10" y="259.20" width="5.60" height="11.70" rx="0.8" fill="#616161" transform="rotate(0.0 1366.9 270.9)"/><rect x="1364.10" y="259.20" width="5.60" height="11.70" rx="0.8" fill="#616161" transform="rotate(60.0 1366.9 270.9)"/><rect x="1364.10" y="259.20" width="5.60" height="11.70" rx="0.8" fill="#616161" transform="rotate(120.0 1366.9 270.9)"/><rect x="1364.10" y="259.20" width="5.60" height="11.70" rx="0.8" fill="#616161" transform="rotate(180.0 1366.9 270.9)"/><rect x="1364.10" y="259.20" width="5.60" height="11.70" rx="0.8" fill="#616161" transform="rotate(240.0 1366.9 270.9)"/><rect x="1364.10" y="259.20" width="5.60" height="11.70" rx="0.8" fill="#616161" transform="rotate(300.0 1366.9 270.9)"/><circle cx="1366.9" cy="270.9" r="4.1" fill="#eeeeee"/><path d="M164,1984.2 H206 Q212,1984.2 212,1990.2 V2009.7 Q212,2015.7 206,2015.7 H164 A15.75,15.75 0 0 1 164,1984.2 Z" fill="#bdbdbd"/><circle cx="164.1" cy="2000.1" r="10" fill="#fff"/><rect x="285.2" y="1987.2" width="29.7" height="29.6" fill="#424242"/><text x="289" y="2011" style="font-family:'Liberation Sans',sans-serif;font-size:19px;fill:#fff">$</text><rect x="300" y="2008.5" width="8.5" height="2.2" fill="#fff"/><rect x="373.5" y="1991.3" width="17.1" height="17.1" rx="1.2" fill="none" stroke="#424242" stroke-width="2.4"/><rect x="377.7" y="1995.7" width="8.6" height="8.6" fill="#424242"/><rect x="380.5" y="1998.5" width="3" height="3" fill="#eeeeee"/><path d="M379,1986.5 V1991 M385,1986.5 V1991 M379,2008.5 V2013.3 M385,2008.5 V2013.3 M368.4,1996.9 H373 M368.4,2002.9 H373" stroke="#424242" stroke-width="2.4" stroke-linecap="round"/><path d="M1044.5,1985.5 L1031.6,1990.3 Q1031.6,2006 1044.5,2011 Q1057.6,2006 1057.6,1990.3 Z" fill="none" stroke="#424242" stroke-width="2.3" stroke-linejoin="round"/><path d="M1039.8,1993.6 L1049.6,2003.8 M1049.6,1993.6 L1039.8,2003.8" stroke="#424242" stroke-width="2.6"/><circle cx="1602" cy="50" r="12.5" fill="none" stroke="#4a4c50" stroke-width="2.8"/><path d="M1604,37.5 V42 Q1600,43 1600,45 V47.5 H1604.5 Q1605,52.5 1609,52.5 Q1612,52.5 1614.5,48.5 A12.5,12.5 0 0 0 1604,37.5 Z" fill="#4a4c50"/><path d="M1589.5,50.3 H1597 Q1602.7,50.8 1602.7,55 V56.5 H1598.5 V61.5 A12.5,12.5 0 0 1 1589.5,50.3 Z" fill="#4a4c50"/><path d="M2002.2,42.1 L2017.3999999999999,57.3 M2017.3999999999999,42.1 L2002.2,57.3" stroke="#45474a" stroke-width="3" stroke-linecap="round"/><path d="M2075,50 H2097 M2086,39 V61" stroke="#45474a" stroke-width="3.4" stroke-linecap="round"/><path d="M2643.7,46.166666666666664 L2652,54.6 L2660.3,46.166666666666664" fill="none" stroke="#45474a" stroke-width="3" stroke-linecap="round" stroke-linejoin="round"/><g fill="none" stroke-linecap="round" stroke-linejoin="round" stroke-width="3.4"><path d="M1461.6,119.4 H1439 M1449.8,108.6 L1439,119.4 L1449.8,130.2" stroke="#bdc1c6"/><path d="M1502.5,119.4 H1525 M1514.2,108.6 L1525,119.4 L1514.2,130.2" stroke="#bdc1c6"/></g><path d="M1587.2,124.8 A10.6,10.6 0 1 1 1584.9,111.9" fill="none" stroke="#bdc1c6" stroke-width="3.4" stroke-linecap="round"/><path d="M1592.2,106.6 V118 H1580.8 Z" fill="#bdc1c6"/><circle cx="1658.4" cy="120.4" r="12.1" fill="none" stroke="#5f6368" stroke-width="2.6"/><circle cx="1658.4" cy="114.6" r="1.8" fill="#5f6368"/><rect x="1657.0" y="118" width="2.8" height="9" fill="#5f6368"/><g fill="none" stroke="#5f6368" stroke-width="2.6"><path d="M2124.5,109.3 H2115.5 Q2113.5,109.3 2113.5,111.3 V128.3 Q2113.5,130.3 2115.5,130.3 H2132.7 Q2134.7,130.3 2134.7,128.3 V120.5"/><path d="M2119.8,124.4 L2133.5,110.5"/><path d="M2127,109.3 H2134.7 V117"/></g><g fill="none" stroke="#5f6368" stroke-width="2.6"><path d="M2183.8,116.3 H2181 Q2179,116.3 2179,118.3 V131.2 Q2179,133.2 2181,133.2 H2195 Q2197,133.2 2197,131.2 V118.3 Q2197,116.3 2195,116.3 H2192.2"/><path d="M2187.9,124 V108"/><path d="M2183.3,112 L2187.9,107.4 L2192.5,112"/></g><polygon points="2251.9,108.0 2255.9,116.7 2265.4,117.8 2258.4,124.3 2260.2,133.7 2251.9,129.0 2243.6,133.7 2245.4,124.3 2238.4,117.8 2247.9,116.7" fill="none" stroke="#5f6368" stroke-width="2.8" stroke-linejoin="miter"/><circle cx="2652" cy="110" r="3.4" fill="#bdc1c6"/><circle cx="2652" cy="120" r="3.4" fill="#bdc1c6"/><circle cx="2652" cy="130" r="3.4" fill="#bdc1c6"/><path d="M2578.5,139.2 Q2587.5,142.6 2596.5,139.2" fill="none" stroke="#c2185b" stroke-width="2"/></svg>
</body></html>
